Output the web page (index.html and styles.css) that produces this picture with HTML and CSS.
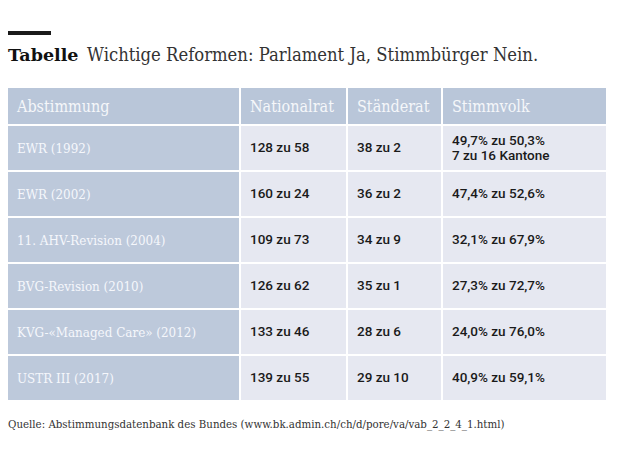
FILE: index.html
```html
<!DOCTYPE html>
<html lang="de">
<head>
<meta charset="utf-8">
<title>Tabelle</title>
<link rel="stylesheet" href="styles.css">
</head>
<body>
<div class="page">
  <div class="bar"></div>
  <h1 class="title"><span class="label">Tabelle</span> <span class="subtitle">Wichtige Reformen: Parlament Ja, Stimmbürger Nein.</span></h1>
  <div class="table">
    <div class="th first">Abstimmung</div>
    <div class="th">Nationalrat</div>
    <div class="th">Ständerat</div>
    <div class="th">Stimmvolk</div>

    <div class="rowhead">EWR (1992)</div>
    <div class="td">128 zu 58</div>
    <div class="td">38 zu 2</div>
    <div class="td">49,7% zu 50,3%<br>7 zu 16 Kantone</div>

    <div class="rowhead">EWR (2002)</div>
    <div class="td">160 zu 24</div>
    <div class="td">36 zu 2</div>
    <div class="td">47,4% zu 52,6%</div>

    <div class="rowhead">11. AHV-Revision (2004)</div>
    <div class="td">109 zu 73</div>
    <div class="td">34 zu 9</div>
    <div class="td">32,1% zu 67,9%</div>

    <div class="rowhead">BVG-Revision (2010)</div>
    <div class="td">126 zu 62</div>
    <div class="td">35 zu 1</div>
    <div class="td">27,3% zu 72,7%</div>

    <div class="rowhead">KVG-«Managed Care» (2012)</div>
    <div class="td">133 zu 46</div>
    <div class="td">28 zu 6</div>
    <div class="td">24,0% zu 76,0%</div>

    <div class="rowhead">USTR III (2017)</div>
    <div class="td">139 zu 55</div>
    <div class="td">29 zu 10</div>
    <div class="td">40,9% zu 59,1%</div>
  </div>
  <p class="source">Quelle: Abstimmungsdatenbank des Bundes (www.bk.admin.ch/ch/d/pore/va/vab_2_2_4_1.html)</p>
</div>
</body>
</html>
```

FILE: styles.css
```css
html, body {
  margin: 0;
  padding: 0;
  background: #ffffff;
}

.page {
  padding: 31px 8px 0 8px;
  font-family: "DejaVu Serif", serif;
  color: #1a1a1a;
}

.bar {
  width: 43px;
  height: 4px;
  background: #1a1a1a;
}

.title {
  margin: 8px 0 0 0;
  font-size: 17.5px;
  line-height: 24px;
  font-weight: normal;
  white-space: nowrap;
}

.label {
  font-weight: bold;
  color: #111111;
}

.subtitle {
  font-family: "DejaVu Serif Condensed", "DejaVu Serif", serif;
  font-stretch: condensed;
  font-size: 18.3px;
  color: #333333;
  margin-left: 3px;
}

.table {
  margin-top: 21px;
  display: grid;
  grid-template-columns: 231px 105px 93px 163px;
  grid-template-rows: 36px repeat(6, 44px);
  gap: 2px;
}

.th {
  background: #b9c6d9;
  color: #f5f7fa;
  font-family: "DejaVu Serif Condensed", "DejaVu Serif", serif;
  font-stretch: condensed;
  font-size: 16px;
  display: flex;
  align-items: center;
  padding-left: 9px;
  white-space: nowrap;
}

.rowhead {
  background: #bdc9db;
  color: #f5f7fb;
  font-family: "DejaVu Serif Condensed", "DejaVu Serif", serif;
  font-stretch: condensed;
  font-size: 13.3px;
  display: flex;
  align-items: center;
  padding-left: 9px;
  white-space: nowrap;
}

.td {
  background: #e6e8f1;
  color: #1a1a1a;
  font-family: Roboto, "Noto Sans", sans-serif;
  font-weight: 500;
  font-size: 13.5px;
  line-height: 15.5px;
  display: flex;
  align-items: center;
  padding-left: 9px;
  white-space: nowrap;
}

.source {
  margin: 17px 0 0 0;
  font-family: "DejaVu Serif Condensed", "DejaVu Serif", serif;
  font-stretch: condensed;
  font-size: 11.4px;
  color: #333333;
  white-space: nowrap;
}
```
